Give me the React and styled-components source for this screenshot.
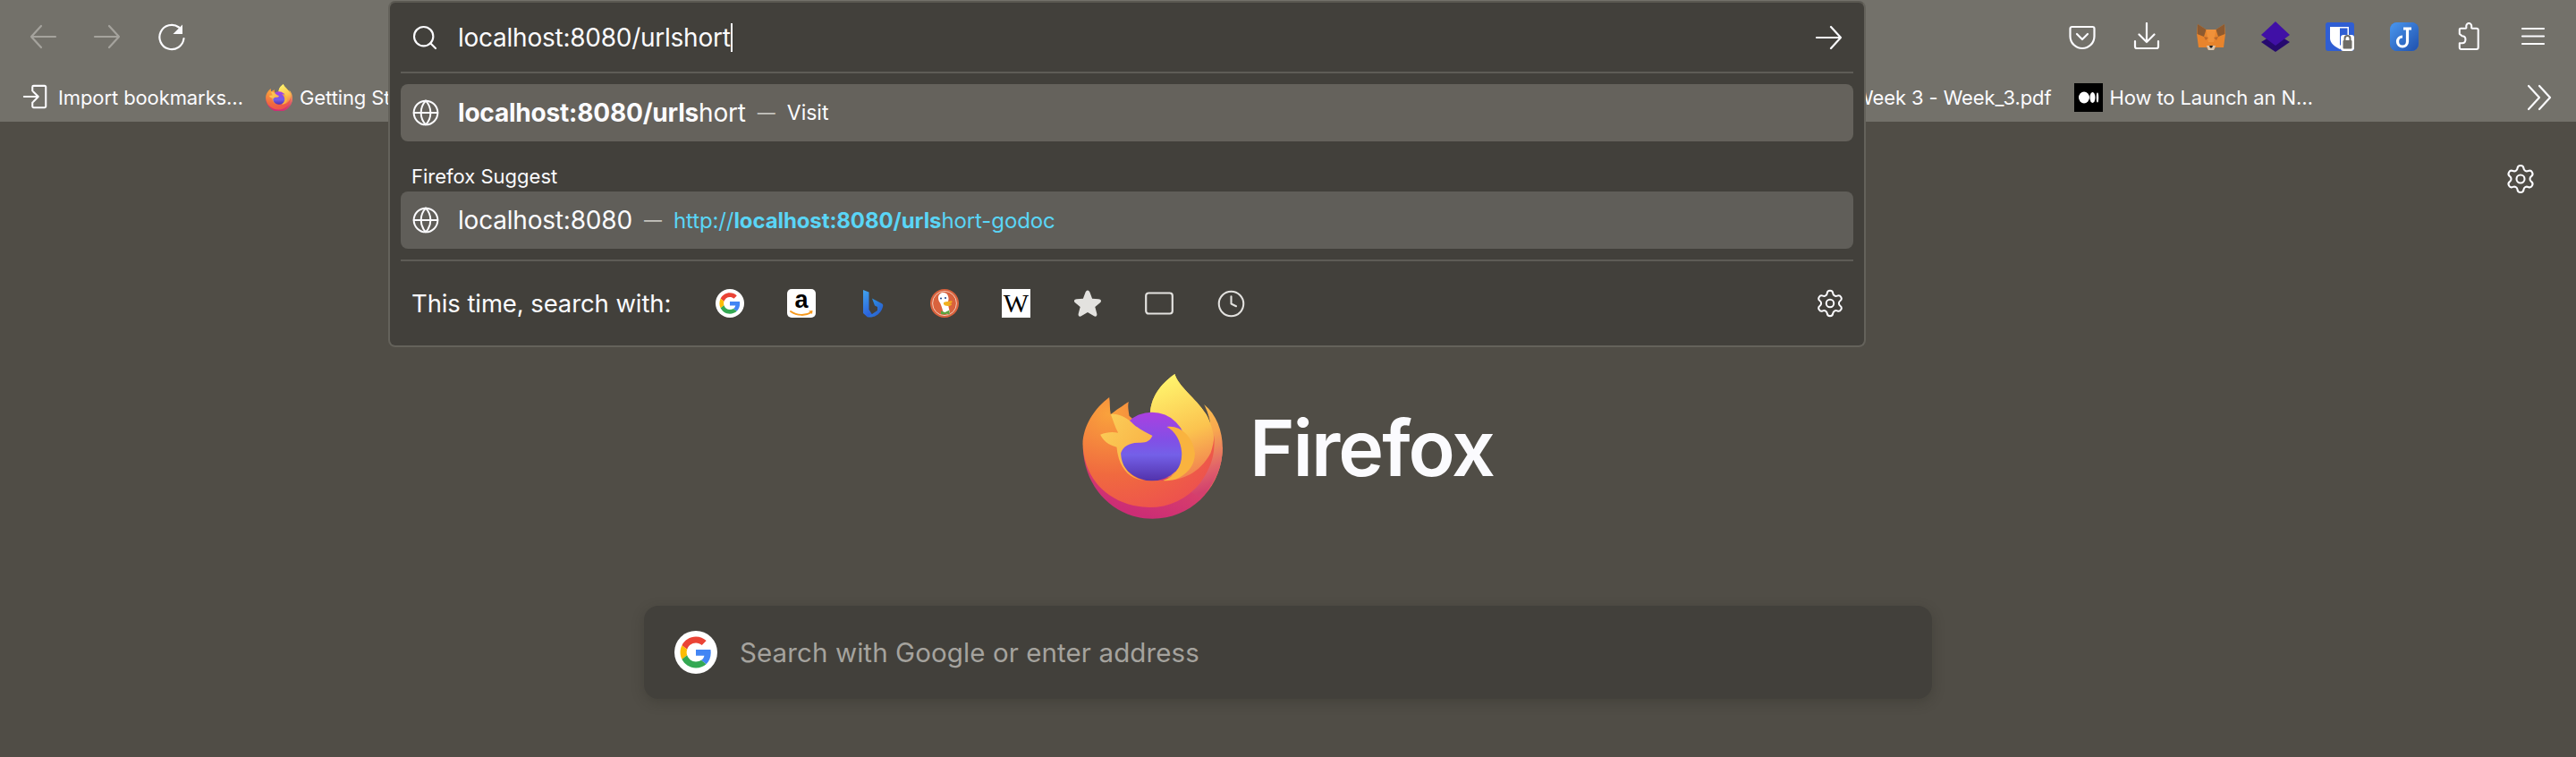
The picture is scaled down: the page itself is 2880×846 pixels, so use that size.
import React from "react";
import styled, { createGlobalStyle } from "styled-components";
import { Search, Globe, Settings, Clock } from "lucide-react";

const Global = createGlobalStyle`
  html, body { margin: 0; padding: 0; background: #504d46; }
  body { font-family: Inter, "Liberation Sans", sans-serif; color: #fbfbfe; overflow: hidden; }
`;

const Page = styled.div`
  position: relative;
  width: 2880px;
  height: 846px;
  display: flex;
  flex-direction: column;
  overflow: hidden;
  background: #504d46;
`;
const Toolbar = styled.header`
  height: 136px;
  flex: none;
  display: flex;
  flex-direction: column;
  background: #73716a;
`;
const NavRow = styled.div`
  height: 82px;
  display: flex;
  align-items: center;
  justify-content: space-between;
  padding: 0 12px;
`;
const IconGroup = styled.div`
  display: flex;
  align-items: center;
`;
const Cell = styled.div`
  width: 72px;
  height: 48px;
  display: flex;
  align-items: center;
  justify-content: center;
  color: ${(p) => (p.$dim ? "#a5a39d" : "#fbfbfe")};
`;
const BookmarkRow = styled.div`
  height: 54px;
  display: flex;
  align-items: center;
  padding: 0 24px 0 25px;
  font-size: 22px;
  letter-spacing: -0.1px;
  white-space: nowrap;
`;
const Bookmark = styled.div`
  display: flex;
  align-items: center;
  gap: ${(p) => p.$gap || 10}px;
  margin-right: ${(p) => p.$mr || 0}px;
`;
const Spacer = styled.div`
  flex: 1;
`;
const Panel = styled.section`
  position: absolute;
  left: 434px;
  top: 1px;
  width: 1652px;
  height: 387px;
  box-sizing: border-box;
  padding: 0 12px;
  display: flex;
  flex-direction: column;
  background: #42403b;
  border: 2px solid #64625b;
  border-top-color: #5b5952;
  border-radius: 8px;
`;
const InputRow = styled.div`
  height: 77px;
  flex: none;
  display: flex;
  align-items: center;
  padding: 0 11px 0 11px;
  font-size: 28px;
`;
const Caret = styled.span`
  display: inline-block;
  width: 2px;
  height: 32px;
  vertical-align: -6px;
  background: #fbfbfe;
`;
const InputText = styled.div`
  margin-left: 21px;
  flex: 1;
  letter-spacing: -0.25px;
`;
const Divider = styled.div`
  height: 2px;
  flex: none;
  background: #5e5c56;
  margin-top: ${(p) => p.$mt || 0}px;
`;
const Row = styled.div`
  height: 64px;
  flex: none;
  margin-top: ${(p) => p.$mt}px;
  display: flex;
  align-items: center;
  padding: 0 12px;
  border-radius: 8px;
  background: ${(p) => p.$bg};
`;
const RowTitle = styled.span`
  margin-left: 20px;
  font-size: 28px;
  letter-spacing: -0.2px;
  b { font-weight: 700; }
`;
const Dash = styled.span`
  margin: 0 13px;
  font-size: 20px;
  color: #c4c3bf;
`;
const Action = styled.span`
  font-size: 23px;
`;
const Url = styled.span`
  font-size: 24px;
  color: #5ad5f6;
  letter-spacing: -0.1px;
  b { font-weight: 700; }
`;
const GroupLabel = styled.div`
  margin: 24px 0 0 12px;
  height: 30px;
  line-height: 30px;
  font-size: 22px;
  flex: none;
`;
const EngineRow = styled.div`
  flex: 1;
  display: flex;
  align-items: center;
  padding: 0 9px 0 12px;
  font-size: 27.5px;
`;
const EngineLabel = styled.span`
  width: 316px;
  letter-spacing: -0.1px;
  white-space: nowrap;
`;
const EngineSlot = styled.div`
  width: 80px;
  height: 32px;
  display: flex;
  align-items: center;
  justify-content: center;
  color: #e3e2df;
`;
const Body = styled.main`
  flex: 1;
  position: relative;
  display: flex;
  flex-direction: column;
  align-items: center;
`;
const GearRow = styled.div`
  align-self: stretch;
  height: 46px;
  margin-top: 41px;
  padding-right: 44px;
  display: flex;
  justify-content: flex-end;
  align-items: center;
`;
const Brand = styled.div`
  margin-top: 195px;
  display: flex;
  align-items: center;
  gap: 30px;
  height: 162px;
`;
const BrandName = styled.div`
  font-size: 86px;
  font-weight: 600;
  letter-spacing: -2px;
  color: #fbfbfe;
  line-height: 1;
  padding-top: 3px;
`;
const SearchBox = styled.div`
  margin-top: 97px;
  width: 1440px;
  height: 104px;
  box-sizing: border-box;
  padding-left: 34px;
  display: flex;
  align-items: center;
  gap: 25px;
  background: #42403b;
  border-radius: 16px;
  box-shadow: 0 4px 14px rgba(40, 38, 34, 0.28);
  font-size: 29.5px;
  color: #a5a39e;
  letter-spacing: 0.1px;
`;
const Favicon = styled.span`
  display: block;
  width: ${(p) => p.$s || 32}px;
  height: ${(p) => p.$s || 32}px;
  flex: none;
  position: relative;
  overflow: hidden;
  background: ${(p) => p.$bg || "transparent"};
  border-radius: ${(p) => p.$r || 0};
`;
const WikiW = styled.span`
  display: flex;
  align-items: center;
  justify-content: center;
  height: 100%;
  font: 400 30px "Liberation Serif", serif;
  color: #000;
`;
const AmazonA = styled.span`
  display: block;
  text-align: center;
  font: 700 27px/24px "Liberation Sans", sans-serif;
  color: #000;
`;
const AmazonSmile = styled.svg`
  display: block;
  margin-top: -1px;
`;

const S = ({ size = 32, children, fill = "none", sw = 2.2, vb = "0 0 32 32" }) => (
  <svg width={size} height={size} viewBox={vb} fill={fill} stroke={fill === "none" ? "currentColor" : "none"} strokeWidth={sw} strokeLinecap="round" strokeLinejoin="round">
    {children}
  </svg>
);

const Back = () => <S><path d="M30 16H3M14 4 3 16l11 12" /></S>;
const Fwd = () => <S><path d="M2 16h27M18 4l11 12-11 12" /></S>;
const Reload = () => (
  <S>
    <path d="M24 5.500A13.600 13.600 0 1 0 29.500 18" />
    <path d="M28 2.500v10.500h-10.500z" fill="currentColor" stroke="none" />
  </S>
);
const Pocket = () => (
  <S><path d="M4.500 5h23a2 2 0 0 1 2 2v8.500C29.500 23 23.500 29 16 29S2.500 23 2.500 15.500V7a2 2 0 0 1 2-2z" /><path d="m10 13 6 6 6-6" /></S>
);
const Download = () => (
  <S><path d="M16 1v21M7.500 13.500 16 22l8.500-8.500M3 21v6a2 2 0 0 0 2 2h22a2 2 0 0 0 2-2v-6" /></S>
);
const Puzzle = () => (
  <S><path d="M4 13V8a1.500 1.500 0 0 1 1.500-1.500h5.500a1 1 0 0 0 1-1.300C11.500 3 12.500 0.500 15 0.500S18.500 3 18 5.200a1 1 0 0 0 1 1.300h5a2 2 0 0 1 2 2v20.500a2 2 0 0 1-2 2H6a2 2 0 0 1-2-2v-5h3c2.500 0 4-2 4-4.500S9.500 15.500 7 15.500z" transform="translate(2 0.500) scale(.95)" /></S>
);
const Menu = () => <S><path d="M4 7h24M4 15.500h24M4 24h24" /></S>;
const Chevrons = () => <S><path d="m3 3 12 13L3 29M15 3l12 13-12 13" /></S>;
const ImportIcon = () => (
  <S size={30}><path d="M12 8V3.500A1.500 1.500 0 0 1 13.500 2h13A1.500 1.500 0 0 1 28 3.500v23a1.500 1.500 0 0 1-1.500 1.500h-13a1.500 1.500 0 0 1-1.500-1.500V22M2 15h17M13 9l6 6-6 6" /></S>
);
const TabIcon = () => (
  <S><rect x="1.200" y="4.500" width="29.600" height="23" rx="3" /></S>
);
const StarIcon = () => (
  <S fill="currentColor"><path d="M16 1.500c1.300 0 2 1 2.500 2.300l2.600 7 7.200.5c3 .3 3.400 2.500 1.700 4l-5.700 4.800 2 7.500c.7 2.700-1.300 3.900-3.500 2.500L16 26l-6.800 4.100c-2.200 1.400-4.200.2-3.500-2.500l2-7.500L2 15.300c-1.700-1.500-1.300-3.700 1.700-4l7.200-.5 2.600-7C14 2.500 14.700 1.500 16 1.500z" /></S>
);

const GoogleG = ({ size }) => (
  <Favicon $s={size} $bg="#fff" $r="50%">
    <svg width="100%" height="100%" viewBox="-9 -9 66 66">
      <path fill="#EA4335" d="M24 9.500c3.540 0 6.710 1.220 9.210 3.600l6.850-6.850C35.900 2.380 30.470 0 24 0 14.620 0 6.510 5.380 2.560 13.220l7.980 6.190C12.430 13.720 17.740 9.500 24 9.500z" />
      <path fill="#4285F4" d="M46.980 24.550c0-1.570-.15-3.090-.38-4.550H24v9.020h12.940c-.58 2.960-2.260 5.480-4.780 7.180l7.730 6c4.510-4.180 7.090-10.360 7.090-17.650z" />
      <path fill="#FBBC05" d="M10.530 28.590c-.48-1.450-.76-2.990-.76-4.590s.27-3.140.76-4.590l-7.980-6.190C.92 16.460 0 20.120 0 24c0 3.880.92 7.540 2.560 10.780l7.970-6.190z" />
      <path fill="#34A853" d="M24 48c6.480 0 11.930-2.130 15.890-5.810l-7.730-6c-2.150 1.450-4.920 2.300-8.160 2.300-6.260 0-11.570-4.220-13.470-9.910l-7.980 6.190C6.510 42.620 14.620 48 24 48z" />
    </svg>
  </Favicon>
);
const Amazon = () => (
  <Favicon $bg="#fff" $r="5px">
    <AmazonA>a</AmazonA>
    <AmazonSmile width="32" height="10" viewBox="0 0 32 10">
      <path d="M4 2c7 5 17 5 23 1" fill="none" stroke="#f79a1e" strokeWidth="2" strokeLinecap="round" />
      <path d="m24 1.500 4.500-.5-.5 4z" fill="#f79a1e" />
    </AmazonSmile>
  </Favicon>
);
const Bing = () => (
  <svg width="24" height="32" viewBox="0 0 24 32">
    <defs>
      <linearGradient id="bg1" x1="0" y1="0" x2="0.3" y2="1"><stop offset="0" stopColor="#42a5ee" /><stop offset="1" stopColor="#2a62dc" /></linearGradient>
      <linearGradient id="bg2" x1="0" y1="0" x2="1" y2="1"><stop offset="0" stopColor="#2d9ce8" /><stop offset="1" stopColor="#2a52c8" /></linearGradient>
    </defs>
    <path d="M1 1l6.500 2.500V23L12 30l-6 1.500L1 27z" fill="url(#bg1)" />
    <path d="M11 10.500 21.500 16c2 1 2 2.500 1.500 4-1 4-4 8-8 10-3 1.500-6 2-8.500 1L17 24v-4l-3-1.500z" fill="url(#bg2)" />
  </svg>
);
const Duck = () => (
  <svg width="32" height="32" viewBox="0 0 32 32">
    <ellipse cx="16" cy="16" rx="16" ry="16" fill="#d9623d" />
    <ellipse cx="16" cy="16" rx="13.400" ry="13.600" fill="none" stroke="#f3c9b8" strokeWidth="1" />
    <path d="M9 10c0-4 3-6.500 6-6 4 .5 5 3 5.500 6 .3 2-.5 3-.5 5 0 4 1 7 2 11-2 1.500-5 2-7 2-1-4-2-8-3.500-11.500C10.500 14.500 9 13 9 10z" fill="#fff" />
    <circle cx="17" cy="10" r="1.100" fill="#2d4f8e" />
    <circle cx="12" cy="10.500" r="1.100" fill="#2d4f8e" />
    <path d="M15 15c3-1.200 6-1.200 9-1.800 1 .7.500 1.900-.5 2.300l-2.500.8 3 .2c.5 1-.5 1.800-2 2.200-3 .7-6.500-.2-7-2z" fill="#f2b01f" />
    <path d="M12 24.500l4.500 1.500 3-1.500 2-1v5.500l-2.500-1.500-3 1-4-.5z" fill="#5ba33e" />
  </svg>
);
const Wiki = () => (
  <Favicon $bg="#fff"><WikiW>W</WikiW></Favicon>
);
const FirefoxLogo = ({ size = 157, id = "ff" }) => (
  <svg width={size} height={size * 1.03} viewBox="95 55 470 485">
    <defs>
      <linearGradient id={`${id}Pink`} x1="0.5" y1="1" x2="0.9" y2="0.4"><stop offset="0" stopColor="#cc2d75" /><stop offset="0.7" stopColor="#d8406a" /><stop offset="1" stopColor="#f28a4a" /></linearGradient>
      <radialGradient id={`${id}Body`} cx="0.2" cy="0.15" r="1"><stop offset="0" stopColor="#f9a23c" /><stop offset="0.55" stopColor="#f06a3f" /><stop offset="1" stopColor="#ed4f4f" /></radialGradient>
      <linearGradient id={`${id}Flame`} x1="0.45" y1="0" x2="0.7" y2="1"><stop offset="0" stopColor="#fff36c" /><stop offset="0.55" stopColor="#fbc34f" /><stop offset="1" stopColor="#f07a50" /></linearGradient>
      <linearGradient id={`${id}Outer`} x1="0.3" y1="0" x2="0.5" y2="1"><stop offset="0" stopColor="#ffd84e" /><stop offset="0.55" stopColor="#f8a84f" /><stop offset="0.85" stopColor="#e0606a" /><stop offset="1" stopColor="#d2406e" /></linearGradient>
      <linearGradient id={`${id}Globe`} x1="0.5" y1="0" x2="0.5" y2="1"><stop offset="0" stopColor="#ab3fe0" /><stop offset="0.42" stopColor="#8150e6" /><stop offset="0.62" stopColor="#7460e8" /><stop offset="1" stopColor="#5232ab" /></linearGradient>
      <linearGradient id={`${id}Fox`} x1="0" y1="0" x2="1" y2="1"><stop offset="0" stopColor="#fbd05a" /><stop offset="1" stopColor="#f9a83f" /></linearGradient>
    </defs>
    <path d="M97 300C100 440 205 540 330 540C465 540 565 430 565 300Z" fill={`url(#${id}Pink)`} />
    <path d="M405 55C415 95 475 135 510 190C518 204 524 225 524 225C522 200 512 175 503 157C545 190 566 250 565 305C564 375 535 430 490 470L380 400L322 190C325 120 370 80 405 55Z" fill={`url(#${id}Outer)`} />
    <path d="M405 55C415 95 475 135 510 190C530 225 540 270 536 305C530 370 470 410 400 412L322 190C325 120 370 80 405 55Z" fill={`url(#${id}Flame)`} />
    <path d="M185 133C188 150 186 172 190 190C205 178 232 160 250 148C246 165 250 178 252 195L335 270L250 340C270 380 310 412 360 412C430 415 490 385 525 320C532 300 536 280 537 260C540 320 530 365 490 420C445 475 385 502 320 502C200 500 100 420 96 290C97 230 135 170 185 133Z" fill={`url(#${id}Body)`} />
    <circle cx="328" cy="298" r="115" fill={`url(#${id}Globe)`} />
    <path d="M378 232C420 225 465 260 472 320C472 350 460 380 420 402C400 412 380 414 365 412C405 400 430 365 428 318C426 280 405 245 378 232Z" fill="#f9b33f" />
    <path d="M190 190C215 185 250 205 265 222C285 240 310 252 330 262C322 278 312 285 290 285C255 285 232 295 224 320C224 360 250 400 300 412C245 405 215 360 210 300C195 295 170 288 155 258C175 250 195 248 215 252C205 235 198 210 190 190Z" fill={`url(#${id}Fox)`} />
  </svg>
);
const Fox = () => (
  <svg width="32" height="30" viewBox="0 0 32 30">
    <path d="M1 1l9.500 6h11L31 1l1 11-2 15h-9l-2 3h-6l-2-3H2L0 12z" fill="#e8842c" />
    <path d="M1 1l9.500 6L8 15l-7.500-3zM31 1l-9.500 6L24 15l7.500-3z" fill="#8d5a30" />
    <path d="M10.500 7h11L19 21h-6z" fill="#f0913a" />
    <path d="M8 15l5 1-3 3zM24 15l-5 1 3 3z" fill="#b9692c" />
    <path d="M11 25h10l-2 5h-6z" fill="#d9c6b0" />
    <path d="M14 25h4l-1 2.500h-2z" fill="#1d1d1d" />
  </svg>
);
const Layers = () => (
  <svg width="34" height="34" viewBox="0 0 34 34">
    <path d="M17 13 33 23 17 34 1 23z" fill="#26096f" />
    <path d="M17 0 33 15 17 27 1 15z" fill="#4010a6" />
  </svg>
);
const Bitwarden = () => (
  <Favicon $bg="#2f5ed3" $r="3px">
    <svg width="32" height="32" viewBox="0 0 32 32">
      <path d="M5 5h21v13c0 5-5 9-10 12C10 27 5 23 5 18z" fill="#fff" />
      <path d="M16 6.500h8.500V18l-8.500 8z" fill="#2f5ed3" />
      <rect x="17" y="14" width="15" height="18" rx="3" fill="#fff" />
      <rect x="19.500" y="20" width="10" height="9.500" rx="1" fill="#6f6d67" />
      <path d="M21.500 20v-2a3 3 0 0 1 6 0v2" fill="none" stroke="#6f6d67" strokeWidth="2" />
    </svg>
  </Favicon>
);
const Joplin = () => (
  <Favicon $bg="#2f6fd6" $r="8px">
    <svg width="32" height="32" viewBox="0 0 32 32">
      <defs><linearGradient id="jp" x1="0" y1="0" x2="1" y2="1"><stop offset="0" stopColor="#4a97ee" /><stop offset="1" stopColor="#1f50ad" /></linearGradient></defs>
      <rect width="32" height="32" fill="url(#jp)" />
      <path d="M19.500 7v14.500a5.500 5.500 0 1 1-5.500-5.500" fill="none" stroke="#fff" strokeWidth="3.200" />
      <path d="M15 7h9" stroke="#fff" strokeWidth="3.200" />
    </svg>
  </Favicon>
);
const Medium = () => (
  <Favicon $bg="#000">
    <svg width="32" height="32" viewBox="0 0 32 32">
      <ellipse cx="11" cy="16" rx="6" ry="6.500" fill="#fff" />
      <ellipse cx="20.500" cy="16" rx="3" ry="6" fill="#fff" />
      <ellipse cx="26" cy="16" rx="1.200" ry="5.500" fill="#fff" />
    </svg>
  </Favicon>
);

export default function App() {
  return (
    <Page>
      <Global />
      <Toolbar>
        <NavRow>
          <IconGroup>
            <Cell $dim><Back /></Cell>
            <Cell $dim><Fwd /></Cell>
            <Cell><Reload /></Cell>
          </IconGroup>
          <IconGroup>
            <Cell><Pocket /></Cell>
            <Cell><Download /></Cell>
            <Cell><Fox /></Cell>
            <Cell><Layers /></Cell>
            <Cell><Bitwarden /></Cell>
            <Cell><Joplin /></Cell>
            <Cell><Puzzle /></Cell>
            <Cell><Menu /></Cell>
          </IconGroup>
        </NavRow>
        <BookmarkRow>
          <Bookmark $mr={25}><ImportIcon />Import bookmarks…</Bookmark>
          <Bookmark $gap={8}><FirefoxLogo size={30} id="fav" />Getting Started</Bookmark>
          <Spacer />
          <Bookmark $mr={25}>Week 3 - Week_3.pdf</Bookmark>
          <Bookmark $gap={8} $mr={238}><Medium />How to Launch an N…</Bookmark>
          <Chevrons />
        </BookmarkRow>
      </Toolbar>
      <Body>
        <GearRow><Settings size={36} strokeWidth={1.4} /></GearRow>
        <Brand>
          <FirefoxLogo />
          <BrandName>Firefox</BrandName>
        </Brand>
        <SearchBox>
          <GoogleG size={48} />
          Search with Google or enter address
        </SearchBox>
      </Body>
      <Panel>
        <InputRow>
          <Search size={32} strokeWidth={1.6} />
          <InputText>localhost:8080/urlshort<Caret /></InputText>
          <Fwd />
        </InputRow>
        <Divider />
        <Row $mt={12} $bg="#65625c">
          <Globe size={32} strokeWidth={1.5} />
          <RowTitle><b>localhost:8080/urls</b>hort</RowTitle>
          <Dash>—</Dash>
          <Action>Visit</Action>
        </Row>
        <GroupLabel>Firefox Suggest</GroupLabel>
        <Row $mt={2} $bg="#605e59">
          <Globe size={32} strokeWidth={1.5} />
          <RowTitle>localhost:8080</RowTitle>
          <Dash>—</Dash>
          <Url>http://<b>localhost:8080/urls</b>hort-godoc</Url>
        </Row>
        <Divider $mt={12} />
        <EngineRow>
          <EngineLabel>This time, search with:</EngineLabel>
          <EngineSlot><GoogleG size={32} /></EngineSlot>
          <EngineSlot><Amazon /></EngineSlot>
          <EngineSlot><Bing /></EngineSlot>
          <EngineSlot><Duck /></EngineSlot>
          <EngineSlot><Wiki /></EngineSlot>
          <EngineSlot><StarIcon /></EngineSlot>
          <EngineSlot><TabIcon /></EngineSlot>
          <EngineSlot><Clock size={33} strokeWidth={1.5} /></EngineSlot>
          <Spacer />
          <Settings size={34} strokeWidth={1.4} />
        </EngineRow>
      </Panel>
    </Page>
  );
}
